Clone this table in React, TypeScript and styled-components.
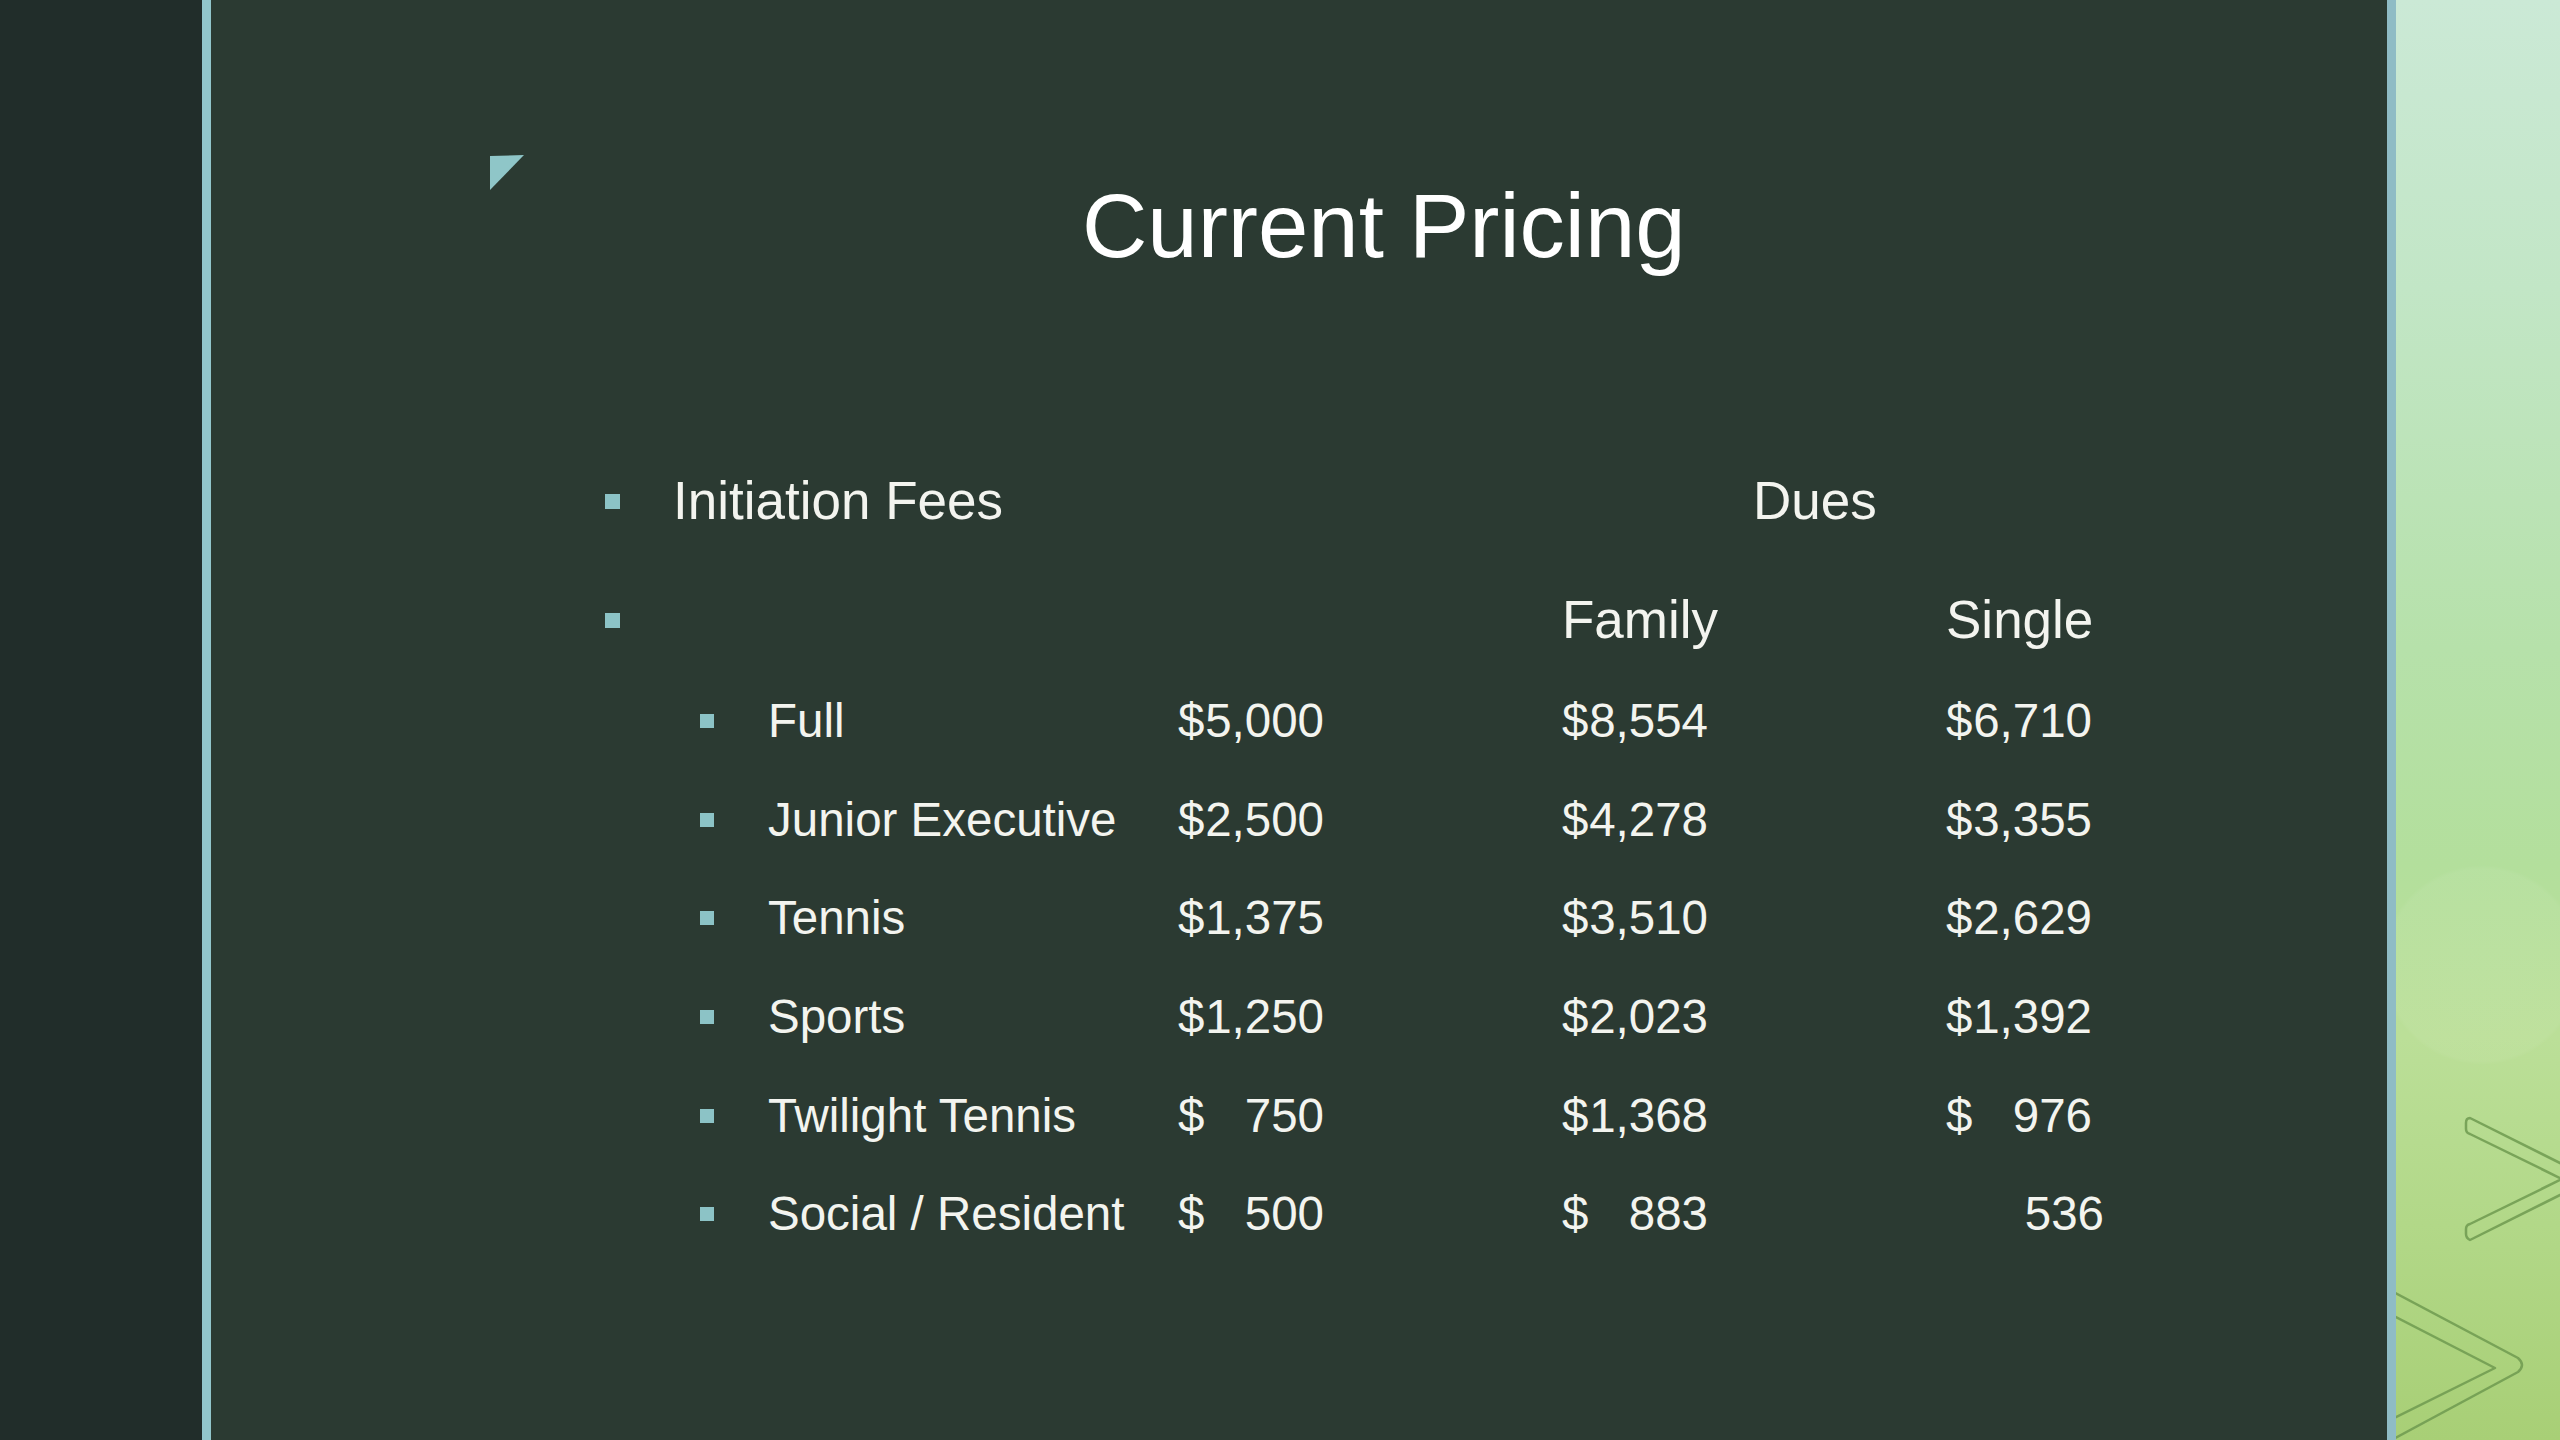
import styled, { createGlobalStyle } from 'styled-components';

const GlobalStyle = createGlobalStyle`
  html,
  body {
    margin: 0;
    padding: 0;
    background: #202d2a;
    overflow: hidden;
  }
`;

const Frame = styled.div`
  width: 2560px;
  height: 1440px;
  display: flex;
  font-family: 'Liberation Sans', Arial, sans-serif;
  color: #f3f4ef;
`;

const Gutter = styled.div`
  width: 202px;
  flex: none;
  background: #212d2a;
`;

const Rule = styled.div<{ $color: string }>`
  width: 9px;
  flex: none;
  background: ${(p) => p.$color};
`;

const Slide = styled.section`
  flex: 1;
  min-width: 0;
  position: relative;
  background: #2b3a32;
  padding-top: 170px;
  box-sizing: border-box;
`;

const Corner = styled.svg`
  position: absolute;
  left: 279px;
  top: 155px;
`;

const Title = styled.h1`
  margin: 0 0 0 871px;
  font-size: 90.5px;
  line-height: 112px;
  font-weight: 400;
  color: #ffffff;
  white-space: nowrap;
`;

const Outline = styled.div`
  margin: 187px 0 0 394px;
  display: flex;
  flex-direction: column;
`;

const Topics = styled.div`
  display: flex;
  flex-direction: column;
  gap: 55px;
`;

const TopicRow = styled.div`
  display: grid;
  grid-template-columns: 68px 1080px auto;
  align-items: center;
  height: 64px;
  font-size: 53px;
  line-height: 64px;
  white-space: nowrap;
`;

const ColumnRow = styled.div`
  display: grid;
  grid-template-columns: 95px 68px 410px 384px 384px 148px;
  align-items: center;
  height: 64px;
  font-size: 53px;
  line-height: 64px;
  white-space: nowrap;
`;

const PriceList = styled.div`
  margin-top: 37px;
  display: flex;
  flex-direction: column;
  gap: 34.7px;
`;

const PriceRow = styled.div`
  display: grid;
  grid-template-columns: 95px 68px 410px 384px 384px 148px;
  align-items: center;
  height: 64px;
  font-size: 47.5px;
  line-height: 64px;
  white-space: nowrap;
`;

const Bullet = styled.span<{ $size: number; $col?: number }>`
  grid-column: ${(p) => p.$col ?? 'auto'};
  width: ${(p) => p.$size}px;
  height: ${(p) => p.$size}px;
  background: #8cc3c6;
`;

const Cell = styled.span<{ $col: number }>`
  grid-column: ${(p) => p.$col};
`;

const Money = styled.span<{ $shift?: number }>`
  width: 146px;
  display: flex;
  justify-content: space-between;
  margin-right: ${(p) => -(p.$shift ?? 0)}px;
  margin-left: auto;
`;

const MoneyCell = styled.span`
  display: flex;
  width: 146px;
`;

const Accent = styled.aside`
  width: 164px;
  flex: none;
  position: relative;
  overflow: hidden;
  background:
    radial-gradient(circle at 86px 965px, rgba(255, 255, 255, 0.06) 0, rgba(255, 255, 255, 0.05) 96px, rgba(255, 255, 255, 0) 100px),
    linear-gradient(180deg, #cbe9d6 0%, #c2e6c6 20%, #b6e1aa 45%, #b3df9c 60%, #bbdf98 72%, #b2d888 85%, #a8cf76 100%);
`;

const Chevrons = styled.svg`
  position: absolute;
  left: 0;
  top: 0;
`;

type Price = { cur: string; amt: string; shift?: number };

type Plan = {
  name: string;
  initiation: Price;
  family: Price;
  single: Price;
};

const p = (s: string, shift?: number): Price => {
  if (s.startsWith('$ ')) return { cur: '$', amt: s.slice(2), shift };
  if (s.startsWith('$')) return { cur: '$', amt: s.slice(1), shift };
  return { cur: '', amt: s, shift };
};

const plans: Plan[] = [
  { name: 'Full', initiation: p('$5,000'), family: p('$8,554'), single: p('$6,710') },
  { name: 'Junior Executive', initiation: p('$2,500'), family: p('$4,278'), single: p('$3,355') },
  { name: 'Tennis', initiation: p('$1,375'), family: p('$3,510'), single: p('$2,629') },
  { name: 'Sports', initiation: p('$1,250'), family: p('$2,023'), single: p('$1,392') },
  { name: 'Twilight Tennis', initiation: p('$ 750'), family: p('$1,368'), single: p('$ 976') },
  { name: 'Social / Resident', initiation: p('$ 500'), family: p('$ 883'), single: p('536', 12) },
];

const Amount = ({ value, col }: { value: Price; col: number }) => (
  <Cell $col={col}>
    <MoneyCell>
      <Money $shift={value.shift}>
        <span>{value.cur}</span>
        <span>{value.amt}</span>
      </Money>
    </MoneyCell>
  </Cell>
);

export default function App() {
  return (
    <>
      <GlobalStyle />
      <Frame>
        <Gutter />
        <Rule $color="#92c6cb" />
        <Slide>
          <Corner width="34" height="35" viewBox="0 0 34 35">
            <polygon points="0,1 34,0 0,35" fill="#8fc6c8" />
          </Corner>
          <Title>Current Pricing</Title>
          <Outline>
            <Topics>
              <TopicRow>
                <Bullet $size={15} />
                <span>Initiation Fees</span>
                <span>Dues</span>
              </TopicRow>
              <ColumnRow>
                <Bullet $size={15} $col={1} />
                <Cell $col={5}>Family</Cell>
                <Cell $col={6}>Single</Cell>
              </ColumnRow>
            </Topics>
            <PriceList>
              {plans.map((plan) => (
                <PriceRow key={plan.name}>
                  <Bullet $size={14} $col={2} />
                  <Cell $col={3}>{plan.name}</Cell>
                  <Amount value={plan.initiation} col={4} />
                  <Amount value={plan.family} col={5} />
                  <Amount value={plan.single} col={6} />
                </PriceRow>
              ))}
            </PriceList>
          </Outline>
        </Slide>
        <Rule $color="#8fbcc5" />
        <Accent>
          <Chevrons width="164" height="1440" viewBox="0 0 164 1440">
            <g fill="none" stroke="#6f9a50" strokeOpacity="0.85" strokeWidth="2.5" strokeLinejoin="round">
              <path d="M74,1118 L196,1179 L74,1240 Q70,1238 70,1234 L70,1229 Q70,1225 74,1224 L166,1179 L74,1134 Q70,1133 70,1129 L70,1123 Q70,1118 74,1118 Z" />
              <path d="M-10,1288 L122,1358 Q130,1365 122,1372 L-10,1443 M-10,1312 L99,1368 L-10,1422" />
            </g>
          </Chevrons>
        </Accent>
      </Frame>
    </>
  );
}
